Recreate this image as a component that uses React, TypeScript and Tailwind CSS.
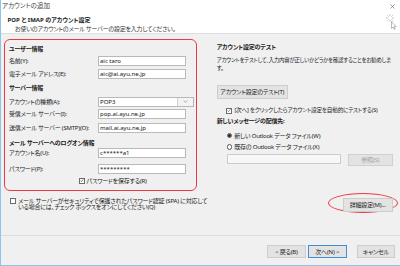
import type { ReactElement, ReactNode } from 'react';

function TextBox({ value, className }: { value?: string; className: string }): ReactElement {
  return (
    <div className={`${className} flex items-center border border-[#b9b9b9] bg-white pl-[1.5px] text-[6px] tracking-normal text-[#111]`}>
      {value}
    </div>
  );
}

function Check({ checked }: { checked?: boolean }): ReactElement {
  return (
    <span className="flex h-[6px] w-[6px] shrink-0 items-center justify-center border border-[#6d6d6d] bg-white">
      {checked && (
        <svg viewBox="0 0 6 6" className="h-[5px] w-[5px]">
          <path d="M0.8 3.1 L2.3 4.6 L5.2 1.2" fill="none" stroke="#222" strokeWidth="0.8" />
        </svg>
      )}
    </span>
  );
}

function Radio({ checked }: { checked?: boolean }): ReactElement {
  return (
    <span className="flex h-[5.5px] w-[5.5px] shrink-0 items-center justify-center rounded-full border border-[#555] bg-white">
      {checked && <span className="h-[2.5px] w-[2.5px] rounded-full bg-[#222]" />}
    </span>
  );
}

function Row({ label, children, className }: { label: string; children: ReactNode; className: string }): ReactElement {
  return (
    <div className={`${className} flex items-center`}>
      <span className="w-[88.5px] shrink-0 whitespace-nowrap">{label}</span>
      {children}
    </div>
  );
}

function Btn({ children, className }: { children: ReactNode; className: string }): ReactElement {
  return (
    <div className={`${className} flex items-center justify-center whitespace-nowrap border bg-[#e3e3e3] text-[6px]`}>
      {children}
    </div>
  );
}

export default function App(): ReactElement {
  return (
    <div className="relative flex h-[266px] w-[400px] flex-col overflow-hidden border-b border-l border-[#8ec4ec] bg-[#f0f0f0] font-['Noto_Sans','Noto_Sans_CJK_JP',sans-serif] text-[6px] leading-none tracking-[-0.2px] text-[#1b1b1b] [font-feature-settings:'palt']">
      {/* header */}
      <div className="relative h-[34px] shrink-0 border-b border-[#dedede] bg-white">
        <div className="flex h-[12px] items-center justify-between pl-[1px] pr-[5px]">
          <span className="text-[6.5px] tracking-normal text-[#444]">アカウントの追加</span>
          <svg viewBox="0 0 6 6" className="h-[5px] w-[5px]">
            <path d="M0.5 0.5 L5.5 5.5 M5.5 0.5 L0.5 5.5" stroke="#444" strokeWidth="0.6" />
          </svg>
        </div>
        <div className="mt-[5px] pl-[6.5px] font-bold tracking-normal">POP と IMAP のアカウント設定</div>
        <div className="mt-[3px] whitespace-nowrap pl-[14px] text-[#333]">お使いのアカウントのメール サーバーの設定を入力してください。</div>
        <svg viewBox="0 0 12 17" className="absolute left-[384px] top-[13px] h-[17px] w-[12px]">
          <g stroke="#9a9a9a" strokeWidth="0.6">
            <path d="M5 1 V3 M5 7 V9 M1 5 H3 M7 5 H9 M2.2 2.2 L3.6 3.6 M6.4 6.4 L7.8 7.8 M7.8 2.2 L6.4 3.6 M2.2 7.8 L3.6 6.4" />
          </g>
          <path d="M6.5 8.5 V15.5 L8 14 L9.2 16.5 L10.2 16 L9 13.6 L11 13.6 Z" fill="#fff" stroke="#777" strokeWidth="0.5" />
        </svg>
      </div>

      {/* body */}
      <div className="flex h-[201px] shrink-0">
        <div className="ml-[3px] w-[193px] shrink-0">
          <div className="mt-[5px] flex h-[152px] flex-col rounded-[6px] border-[1.5px] border-[#ea3b43] pl-[4px]">
            <div className="mt-[4.5px] flex h-[8px] items-center font-bold">ユーザー情報</div>
            <Row label="名前(Y):" className="mt-[3px]">
              <TextBox value="aic taro" className="h-[10px] w-[88px]" />
            </Row>
            <Row label="電子メール アドレス(E):" className="mt-[3.5px]">
              <TextBox value="aic@ai.ayu.ne.jp" className="h-[10px] w-[88px]" />
            </Row>
            <div className="mt-[4.5px] flex h-[8px] items-center font-bold">サーバー情報</div>
            <Row label="アカウントの種類(A):" className="mt-[5px]">
              <div className="flex h-[10px] w-[96px] items-center border border-[#b9b9b9] bg-white tracking-normal text-[#111]">
                <span className="flex-1 pl-[1.5px]">POP3</span>
                <span className="flex h-full w-[16px] items-center justify-center border-l border-[#cfcfcf] bg-[#f3f3f3]">
                  <svg viewBox="0 0 6 4" className="h-[3px] w-[5px]">
                    <path d="M0.5 0.8 L3 3.2 L5.5 0.8" fill="none" stroke="#666" strokeWidth="0.7" />
                  </svg>
                </span>
              </div>
            </Row>
            <Row label="受信メール サーバー(I):" className="mt-[2.7px]">
              <TextBox value="pop.ai.ayu.ne.jp" className="h-[10px] w-[88px]" />
            </Row>
            <Row label="送信メール サーバー (SMTP)(O):" className="mt-[4px]">
              <TextBox value="mail.ai.ayu.ne.jp" className="h-[10.3px] w-[88px]" />
            </Row>
            <div className="mt-[5.7px] flex h-[8px] items-center font-bold">メール サーバーへのログオン情報</div>
            <Row label="アカウント名(U):" className="mt-[1.3px]">
              <TextBox value="c******a1" className="h-[10px] w-[88px]" />
            </Row>
            <Row label="パスワード(P):" className="mt-[5.4px]">
              <TextBox value="*********" className="h-[10.3px] w-[88px]" />
            </Row>
            <div className="mt-[3.4px] flex h-[6px] items-center gap-[2px] pl-[69.5px]">
              <Check checked />
              <span>パスワードを保存する(R)</span>
            </div>
          </div>
          <div className="mt-[6.5px] flex items-start gap-[2px] pl-[6px]">
            <span className="mt-[0.5px]">
              <Check />
            </span>
            <span className="whitespace-nowrap leading-[6.6px]">
              メール サーバーがセキュリティで保護されたパスワード認証 (SPA) に対応して
              <br />
              いる場合には、チェック ボックスをオンにしてください(Q)
            </span>
          </div>
        </div>

        <div className="ml-[19.7px] flex w-[181px] flex-col">
          <div className="mt-[9.3px] flex h-[8px] items-center font-bold">アカウント設定のテスト</div>
          <div className="mt-[4.5px] whitespace-nowrap text-[5.4px] leading-[8.3px]">
            アカウントをテストして、入力内容が正しいかどうかを確認することをお勧めしま
            <br />す。
          </div>
          <Btn className="mt-[12.5px] h-[13.7px] w-[71px] border-[#cdcdcd]">アカウント設定のテスト(T)</Btn>
          <div className="mt-[9px] flex h-[6px] items-center gap-[2.5px] pl-[9.3px]">
            <Check checked />
            <span className="whitespace-nowrap text-[5.6px]">[次へ] をクリックしたらアカウント設定を自動的にテストする(S)</span>
          </div>
          <div className="mt-[3.3px] flex h-[8px] items-center font-bold">新しいメッセージの配信先:</div>
          <div className="mt-[7.7px] flex h-[6px] items-center gap-[2px] pl-[10px]">
            <Radio checked />
            <span>新しい Outlook データ ファイル(W)</span>
          </div>
          <div className="mt-[5.6px] flex h-[6px] items-center gap-[2px] pl-[10px]">
            <Radio />
            <span>既存の Outlook データ ファイル(X)</span>
          </div>
          <div className="mt-[3.7px] flex items-start gap-[6.7px] pl-[10px]">
            <div className="h-[10.3px] w-[114.3px] border border-[#cccccc] bg-[#f7f7f7]" />
            <Btn className="h-[12.3px] w-[45px] border-[#d0d0d0] text-[#a2a2a2]">参照(S)</Btn>
          </div>
          <div className="ml-[111px] mt-[27px] flex h-[20px] w-[70px] items-start rounded-[50%] border border-[#ea3b43] pl-[14px] pt-[4px]">
            <Btn className="h-[13.4px] w-[50px] border-[#cdcdcd]">詳細設定(M)...</Btn>
          </div>
        </div>
      </div>

      {/* footer */}
      <div className="flex flex-1 items-start justify-end border-t border-[#dcdcdc] pr-[5px] pt-[9px]">
        <Btn className="h-[13.3px] w-[39.3px] border-[#cdcdcd]">&lt; 戻る(B)</Btn>
        <Btn className="ml-[1.7px] h-[13.3px] w-[39px] border-[#3f8fd8]">次へ(N) &gt;</Btn>
        <Btn className="ml-[10px] h-[13.3px] w-[38.3px] border-[#cdcdcd]">キャンセル</Btn>
      </div>
    </div>
  );
}
